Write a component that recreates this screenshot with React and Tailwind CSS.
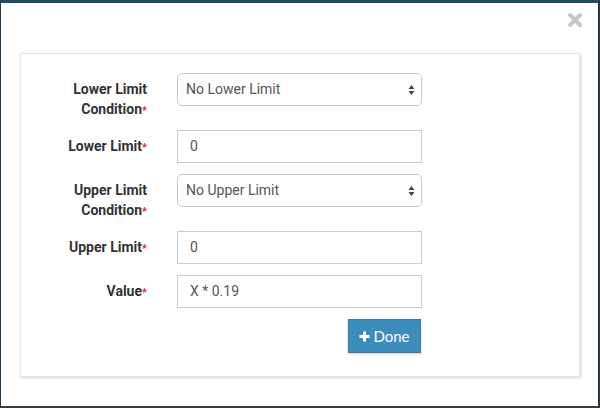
import React from 'react';

const rows = [
  { label: ['Lower Limit', 'Condition'], kind: 'select', value: 'No Lower Limit' },
  { label: ['Lower Limit'], kind: 'input', value: '0' },
  { label: ['Upper Limit', 'Condition'], kind: 'select', value: 'No Upper Limit' },
  { label: ['Upper Limit'], kind: 'input', value: '0' },
  { label: ['Value'], kind: 'input', value: 'X * 0.19' },
];

function Label({ lines }) {
  return (
    <div className="w-[126px] shrink-0 pt-[6px] text-right text-[14px] font-bold leading-[20px] text-[#333]">
      {lines.map((l, i) => (
        <div key={i} className="h-[20px]">
          {l}
          {i === lines.length - 1 && <span className="text-[11px] leading-none text-[#e02020]">*</span>}
        </div>
      ))}
    </div>
  );
}

function Field({ kind, value }) {
  if (kind === 'select') {
    return (
      <div className="flex h-[33px] w-[245px] items-center justify-between rounded-[5px] border border-[#c8c8c8] bg-white pl-[8px] pr-[6px] text-[14px] text-[#555]">
        <span>{value}</span>
        <svg width="7" height="12" viewBox="0 0 7 12">
          <path d="M3.5 1 L6.5 5 H0.5 Z" fill="#444" />
          <path d="M3.5 11 L6.5 7 H0.5 Z" fill="#444" />
        </svg>
      </div>
    );
  }
  return (
    <div className="flex h-[33px] w-[245px] items-center border border-[#ccc] bg-white pl-[12px] text-[14px] text-[#555]">
      {value}
    </div>
  );
}

export default function App() {
  return (
    <div className="h-[408px] w-[600px] overflow-hidden border-t-[3px] border-l border-r-2 border-b-2 border-t-[#1e4b68] border-l-[#1d3b50] border-r-[#2a3640] border-b-[#3a3a3a] bg-white font-['Roboto',sans-serif]">
      <div className="relative h-full px-[19px] pt-[50px]">
        <button className="absolute right-[15px] top-[9px] p-0">
          <svg width="16" height="16" viewBox="0 0 16 16">
            <path d="M3 3 L13 13 M13 3 L3 13" stroke="#c6c6c6" strokeWidth="4" strokeLinecap="round" />
          </svg>
        </button>
        <div className="w-[560px] border border-[#e6e6e6] bg-white pb-[23px] pt-[19px] shadow-[1px_1px_3px_rgba(0,0,0,0.18)]">
          <div className="flex flex-col gap-[11px]">
            {rows.map((r, i) => (
              <div key={i} className="flex items-start gap-[30px]">
                <Label lines={r.label} />
                <Field kind={r.kind} value={r.value} />
              </div>
            ))}
            <div className="flex pl-[327px]">
              <button className="flex h-[34px] w-[73px] items-center justify-center gap-[3px] border border-[#357ea8] bg-[#3c8dbc] font-['Lato',sans-serif] text-[15px] text-white shadow-[0_1px_2px_rgba(0,0,0,0.2)]">
                <svg width="11" height="11" viewBox="0 0 11 11">
                  <path d="M5.5 0.5 V10.5 M0.5 5.5 H10.5" stroke="#fff" strokeWidth="3" />
                </svg>
                Done
              </button>
            </div>
          </div>
        </div>
      </div>
    </div>
  );
}
